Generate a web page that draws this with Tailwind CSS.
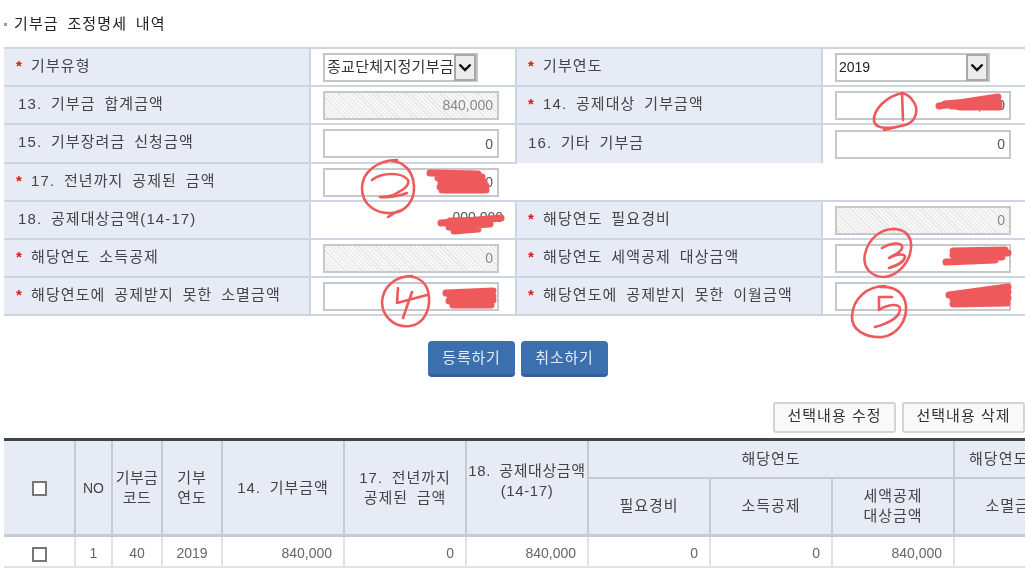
<!DOCTYPE html>
<html lang="ko">
<head>
    <meta charset="UTF-8">
    <title>기부금 조정명세 내역</title>
    <script src="https://cdn.jsdelivr.net/npm/@tailwindcss/browser@4"></script>
</head>
<body class="bg-white overflow-hidden">
<div class="relative w-[1025px] h-[568px] overflow-hidden font-['Liberation_Sans','Noto_Sans_CJK_KR',sans-serif] text-[15px] text-[#444] blur-[0.4px]">

    <!-- title -->
    <div class="flex items-center h-[47px] pl-[4px] pt-[2px] gap-[7px] text-[#222] tracking-[1.1px] [word-spacing:3.5px]">
        <span class="w-[3px] h-[3px] bg-[#999]"></span>
        <h2>기부금 조정명세 내역</h2>
    </div>

    <!-- form table -->
    <table class="ml-[4px] w-[1021px] table-fixed border-collapse tracking-[1.1px] [word-spacing:3.5px]">
        <colgroup>
            <col class="w-[306px]"><col class="w-[206px]"><col class="w-[306px]"><col class="w-[203px]">
        </colgroup>
        <tbody>
            <tr class="h-[38px]">
                <td class="border-2 border-l-0 border-[#ccd5e2] bg-[#e7ebf5] pb-[2px] pl-[12px]"><span class="inline-block w-[15px] text-[#d81818] font-bold">*</span>기부유형</td>
                <td class="border-2 border-[#ccd5e2] pl-[12px]">
                    <div class="flex h-[29px] w-[155px] border-2 border-[#c4c4c4] bg-white">
                        <span class="flex-1 overflow-hidden whitespace-nowrap pl-[2px] leading-[24px] tracking-[0.3px] text-[#333]">종교단체지정기부금</span>
                        <span class="flex w-[22px] items-center justify-center border-2 border-[#a8a8a8] bg-[#ececec] -my-[1px]">
                            <svg width="14" height="9" viewBox="0 0 14 9"><path d="M1.5 1.5 L7 7 L12.5 1.5" fill="none" stroke="#111" stroke-width="2.4"/></svg>
                        </span>
                    </div>
                </td>
                <td class="border-2 border-[#ccd5e2] bg-[#e7ebf5] pb-[2px] pl-[11px]"><span class="inline-block w-[15px] text-[#d81818] font-bold">*</span>기부연도</td>
                <td class="border-2 border-r-0 border-[#ccd5e2] pl-[12px]">
                    <div class="flex h-[29px] w-[155px] border-2 border-[#c4c4c4] bg-white">
                        <span class="flex-1 pl-[2px] text-[14px] leading-[25px] tracking-normal text-[#222]">2019</span>
                        <span class="flex w-[22px] items-center justify-center border-2 border-[#a8a8a8] bg-[#ececec] -my-[1px]">
                            <svg width="14" height="9" viewBox="0 0 14 9"><path d="M1.5 1.5 L7 7 L12.5 1.5" fill="none" stroke="#111" stroke-width="2.4"/></svg>
                        </span>
                    </div>
                </td>
            </tr>
            <tr class="h-[38px]">
                <td class="border-2 border-l-0 border-[#ccd5e2] bg-[#e7ebf5] pb-[2px] pl-[14px]">13. 기부금 합계금액</td>
                <td class="border-2 border-[#ccd5e2] pl-[12px]"><input readonly value="840,000" class="block h-[29px] w-[176px] border-2 border-[#c8c8c8] bg-[repeating-linear-gradient(45deg,#f7f7f7_0,#f7f7f7_2px,#e6e6e6_2px,#e6e6e6_3px)] pr-[4px] text-right text-[14px] tracking-normal text-[#888]"></td>
                <td class="border-2 border-[#ccd5e2] bg-[#e7ebf5] pb-[2px] pl-[11px]"><span class="inline-block w-[15px] text-[#d81818] font-bold">*</span>14. 공제대상 기부금액</td>
                <td class="border-2 border-r-0 border-[#ccd5e2] pl-[12px]"><input readonly value="000,000" class="block h-[29px] w-[176px] border-2 border-[#c8c8c8] bg-white pr-[4px] text-right text-[14px] tracking-normal text-[#555]"></td>
            </tr>
            <tr class="h-[39px]">
                <td class="border-2 border-l-0 border-[#ccd5e2] bg-[#e7ebf5] pb-[2px] pl-[14px]">15. 기부장려금 신청금액</td>
                <td class="border-2 border-[#ccd5e2] pl-[12px]"><input readonly value="0" class="block h-[29px] w-[176px] border-2 border-[#c8c8c8] bg-white pr-[4px] text-right text-[14px] tracking-normal text-[#555]"></td>
                <td class="border-t-2 border-[#ccd5e2] bg-[#e7ebf5] pb-[2px] pl-[11px]">16. 기타 기부금</td>
                <td class="border-t-2 border-l-2 border-[#ccd5e2] pl-[12px]"><input readonly value="0" class="block h-[29px] w-[176px] border-2 border-[#c8c8c8] bg-white pr-[4px] text-right text-[14px] tracking-normal text-[#555]"></td>
            </tr>
            <tr class="h-[38px]">
                <td class="border-2 border-l-0 border-[#ccd5e2] bg-[#e7ebf5] pb-[2px] pl-[12px]"><span class="inline-block w-[15px] text-[#d81818] font-bold">*</span>17. 전년까지 공제된 금액</td>
                <td class="border-y-2 border-l-2 border-[#ccd5e2] pl-[12px]"><input readonly value="000,000" class="block h-[29px] w-[176px] border-2 border-[#c8c8c8] bg-white pr-[4px] text-right text-[14px] tracking-normal text-[#555]"></td>
                <td colspan="2" class="border-b-2 border-[#ccd5e2]"></td>
            </tr>
            <tr class="h-[38px]">
                <td class="border-2 border-l-0 border-[#ccd5e2] bg-[#e7ebf5] pb-[2px] pl-[14px]">18. 공제대상금액(14-17)</td>
                <td class="border-2 border-[#ccd5e2] pr-[12px] pb-[6px] text-right text-[14px] tracking-normal text-[#555]">000,000</td>
                <td class="border-2 border-[#ccd5e2] bg-[#e7ebf5] pb-[2px] pl-[11px]"><span class="inline-block w-[15px] text-[#d81818] font-bold">*</span>해당연도 필요경비</td>
                <td class="border-2 border-r-0 border-[#ccd5e2] pl-[12px]"><input readonly value="0" class="block h-[29px] w-[176px] border-2 border-[#c8c8c8] bg-[repeating-linear-gradient(45deg,#f7f7f7_0,#f7f7f7_2px,#e6e6e6_2px,#e6e6e6_3px)] pr-[4px] text-right text-[14px] tracking-normal text-[#888]"></td>
            </tr>
            <tr class="h-[38px]">
                <td class="border-2 border-l-0 border-[#ccd5e2] bg-[#e7ebf5] pb-[2px] pl-[12px]"><span class="inline-block w-[15px] text-[#d81818] font-bold">*</span>해당연도 소득공제</td>
                <td class="border-2 border-[#ccd5e2] pl-[12px]"><input readonly value="0" class="block h-[29px] w-[176px] border-2 border-[#c8c8c8] bg-[repeating-linear-gradient(45deg,#f7f7f7_0,#f7f7f7_2px,#e6e6e6_2px,#e6e6e6_3px)] pr-[4px] text-right text-[14px] tracking-normal text-[#888]"></td>
                <td class="border-2 border-[#ccd5e2] bg-[#e7ebf5] pb-[2px] pl-[11px]"><span class="inline-block w-[15px] text-[#d81818] font-bold">*</span>해당연도 세액공제 대상금액</td>
                <td class="border-2 border-r-0 border-[#ccd5e2] pl-[12px]"><input readonly class="block h-[29px] w-[176px] border-2 border-[#c8c8c8] bg-white"></td>
            </tr>
            <tr class="h-[38px]">
                <td class="border-2 border-l-0 border-[#ccd5e2] bg-[#e7ebf5] pb-[2px] pl-[12px]"><span class="inline-block w-[15px] text-[#d81818] font-bold">*</span>해당연도에 공제받지 못한 소멸금액</td>
                <td class="border-2 border-[#ccd5e2] pl-[12px]"><input readonly class="block h-[29px] w-[176px] border-2 border-[#c8c8c8] bg-white"></td>
                <td class="border-2 border-[#ccd5e2] bg-[#e7ebf5] pb-[2px] pl-[11px]"><span class="inline-block w-[15px] text-[#d81818] font-bold">*</span>해당연도에 공제받지 못한 이월금액</td>
                <td class="border-2 border-r-0 border-[#ccd5e2] pl-[12px]"><input readonly class="block h-[29px] w-[176px] border-2 border-[#c8c8c8] bg-white"></td>
            </tr>
        </tbody>
    </table>

    <!-- submit buttons -->
    <div class="mt-[25px] flex w-[1036px] justify-center gap-[6px] tracking-[0.8px]">
        <button class="h-[36px] w-[87px] rounded-[4px] border-b-[3px] border-[#33609a] bg-[#3c6fae] pt-[1px] text-[#e4ebf4]">등록하기</button>
        <button class="h-[36px] w-[87px] rounded-[4px] border-b-[3px] border-[#33609a] bg-[#3c6fae] pt-[1px] text-[#e4ebf4]">취소하기</button>
    </div>

    <!-- list actions -->
    <div class="mt-[25px] flex justify-end gap-[6px] tracking-[1px] [word-spacing:3.5px] text-[#333]">
        <button class="h-[31px] w-[123px] rounded-[3px] border-2 border-[#d4d4d4] bg-[#f9f9f9] pb-[2px] whitespace-nowrap">선택내용 수정</button>
        <button class="h-[31px] w-[123px] rounded-[3px] border-2 border-[#d4d4d4] bg-[#f9f9f9] pb-[2px] whitespace-nowrap">선택내용 삭제</button>
    </div>

    <!-- list table -->
    <table class="ml-[4px] mt-[5px] w-[1194px] table-fixed border-collapse border-t-[3px] border-t-[#444] text-center tracking-[1px] leading-[20px] [word-spacing:3.5px]">
        <colgroup>
            <col class="w-[71px]"><col class="w-[37px]"><col class="w-[50px]"><col class="w-[60px]"><col class="w-[122px]"><col class="w-[122px]"><col class="w-[122px]"><col class="w-[122px]"><col class="w-[122px]"><col class="w-[122px]"><col class="w-[122px]"><col class="w-[122px]">
        </colgroup>
        <thead class="bg-[#e7ebf5]">
            <tr class="h-[38px]">
                <th rowspan="2" class="border-r-2 border-b-[3px] border-[#c6cad3] font-normal"><input type="checkbox" class="block ml-[28px] mt-[1px] h-[15px] w-[15px] appearance-none border-2 border-[#777] bg-white"></th>
                <th rowspan="2" class="border-x-2 border-b-[3px] border-[#c6cad3] font-normal text-[14px] tracking-normal">NO</th>
                <th rowspan="2" class="border-x-2 border-b-[3px] border-[#c6cad3] font-normal tracking-[0.4px]">기부금<br>코드</th>
                <th rowspan="2" class="border-x-2 border-b-[3px] border-[#c6cad3] font-normal">기부<br>연도</th>
                <th rowspan="2" class="border-x-2 border-b-[3px] border-[#c6cad3] font-normal">14. 기부금액</th>
                <th rowspan="2" class="border-x-2 border-b-[3px] border-[#c6cad3] font-normal">17. 전년까지<br>공제된 금액</th>
                <th rowspan="2" class="border-x-2 border-b-[3px] border-[#c6cad3] pb-[14px] font-normal whitespace-nowrap tracking-[0.6px]">18. 공제대상금액<br>(14-17)</th>
                <th colspan="3" class="border-x-2 border-b-2 border-[#c6cad3] pt-[1px] font-normal">해당연도</th>
                <th colspan="2" class="border-x-2 border-b-2 border-[#c6cad3] pt-[1px] font-normal text-left pl-[14px]">해당연도</th>
            </tr>
            <tr class="h-[58px]">
                <th class="border-x-2 border-b-[3px] border-[#c6cad3] font-normal">필요경비</th>
                <th class="border-x-2 border-b-[3px] border-[#c6cad3] font-normal">소득공제</th>
                <th class="border-x-2 border-b-[3px] border-[#c6cad3] font-normal">세액공제<br>대상금액</th>
                <th class="border-x-2 border-b-[3px] border-[#c6cad3] font-normal">소멸금액</th>
                <th class="border-x-2 border-b-[3px] border-[#c6cad3] font-normal">이월금액</th>
            </tr>
        </thead>
        <tbody class="text-[14px] text-[#666] tracking-normal">
            <tr class="h-[31px]">
                <td class="border-r-2 border-b-2 border-[#e2e2e2]"><input type="checkbox" class="block ml-[28px] mt-[7px] h-[15px] w-[15px] appearance-none border-2 border-[#777] bg-white"></td>
                <td class="border-x-2 border-b-2 border-[#e2e2e2] pt-[3px]">1</td>
                <td class="border-x-2 border-b-2 border-[#e2e2e2] pt-[3px]">40</td>
                <td class="border-x-2 border-b-2 border-[#e2e2e2] pt-[3px]">2019</td>
                <td class="border-x-2 border-b-2 border-[#e2e2e2] pt-[3px] pr-[11px] text-right">840,000</td>
                <td class="border-x-2 border-b-2 border-[#e2e2e2] pt-[3px] pr-[11px] text-right">0</td>
                <td class="border-x-2 border-b-2 border-[#e2e2e2] pt-[3px] pr-[11px] text-right">840,000</td>
                <td class="border-x-2 border-b-2 border-[#e2e2e2] pt-[3px] pr-[11px] text-right">0</td>
                <td class="border-x-2 border-b-2 border-[#e2e2e2] pt-[3px] pr-[11px] text-right">0</td>
                <td class="border-x-2 border-b-2 border-[#e2e2e2] pt-[3px] pr-[11px] text-right">840,000</td>
                <td class="border-x-2 border-b-2 border-[#e2e2e2]"></td>
                <td class="border-x-2 border-b-2 border-[#e2e2e2]"></td>
            </tr>
        </tbody>
    </table>

    <!-- hand drawn marks on top of the screenshot -->
    <svg class="absolute left-0 top-0 pointer-events-none" width="1025" height="568" viewBox="0 0 1025 568" fill="none" stroke="#ee5a5c" stroke-width="2.6" stroke-linecap="round" stroke-linejoin="round">
        <!-- 1 -->
        <path d="M903 93 C886 96 873 110 874 121 C876 131 893 128 905 125 C917 122 919 108 913 101 C910 96 906 94 902 93 M902 93 L903 120 M905 125 L884 130"/>
        <g stroke-width="7">
            <path d="M939 106 L965 102 L998 97 M952 106 L999 104 M960 107 L999 107 M945 104 L990 100"/>
        </g>
        <!-- 2 -->
        <path d="M397 160 C378 160 362 172 362 188 C362 205 376 214 392 213 C406 212 415 200 414 186 C413 171 404 162 392 161 M372 180 C382 172 402 172 408 180 C410 186 402 190 397 193 C392 196 384 197 380 197 C388 198 400 196 407 193 M388 217 L398 211"/>
        <g stroke-width="7">
            <path d="M430 173 L478 174 M438 178 L482 177 M441 183 L484 182 M440 187 L486 186 M442 190 L486 190"/>
        </g>
        <!-- 18 value -->
        <g stroke-width="7">
            <path d="M441 223 L501 218 M450 221 L490 220 M449 227 L490 224 M454 231 L478 229"/>
        </g>
        <!-- 3 -->
        <path d="M895 229 C880 228 868 240 865 254 C862 268 872 277 884 277 C898 276 910 262 911 248 C912 236 905 229 893 229 M882 248 C890 243 900 242 902 246 C904 251 894 255 889 258 C896 254 905 253 905 257 C904 263 895 266 889 268"/>
        <g stroke-width="7">
            <path d="M953 251 L1005 250 M953 255 L1008 253 M956 258 L1002 257 M946 262 L995 260"/>
        </g>
        <!-- 4 -->
        <path d="M412 276 C396 276 383 286 382 302 C382 316 394 328 410 326 C424 324 430 310 429 297 C428 284 420 277 408 276 M398 288 L397 303 L427 295 M412 292 L403 318"/>
        <g stroke-width="7">
            <path d="M446 293 L493 291 M450 297 L493 296 M449 301 L493 300 M453 305 L491 305"/>
        </g>
        <!-- 5 -->
        <path d="M885 286 C868 286 853 298 852 316 C851 330 866 338 882 337 C898 335 907 320 906 306 C905 294 896 286 880 287 M879 297 L892 297 M879 297 L879 310 C888 304 900 303 900 309 C900 318 886 324 875 327"/>
        <g stroke-width="7">
            <path d="M949 295 L1008 287 M953 299 L1008 292 M956 302 L1008 298 M953 304 L1007 303"/>
        </g>
    </svg>
</div>
</body>
</html>
